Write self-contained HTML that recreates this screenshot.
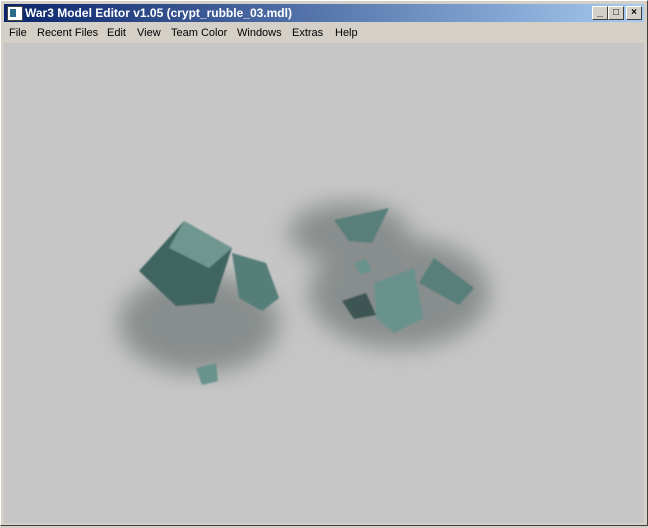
<!DOCTYPE html>
<html><head><style>
body{margin:0;width:648px;height:526px;overflow:hidden;background:#d4d0c8;font-family:"Liberation Sans",Tahoma,sans-serif;}
.win{position:absolute;left:0;top:0;width:646px;height:524px;border:1px solid #fff;border-right-color:#404040;border-bottom-color:#404040;background:#d4d0c8;}
.title{position:absolute;left:3px;top:3px;width:640px;height:18px;background:linear-gradient(to right,#0a246a,#a6caf0);color:#fff;font-weight:bold;font-size:12px;line-height:18px;}
.title .t{position:absolute;left:21px;top:0;}
.ic{position:absolute;left:3px;top:2px;width:14px;height:13px;background:#fff;border:1px solid #444;}
.ic:after{content:"";position:absolute;left:2px;top:2px;width:6px;height:8px;background:#2a6a8a;}
.btn{position:absolute;top:2px;width:14px;height:12px;background:#d4d0c8;border:1px solid #fff;border-right-color:#404040;border-bottom-color:#404040;color:#000;font-size:10px;line-height:12px;text-align:center;font-weight:bold;}
.menu{position:absolute;left:0;top:23px;width:640px;height:18px;font-size:11px;line-height:18px;color:#000;}
.menu span{position:absolute;top:0;}
.view{position:absolute;left:3px;top:42px;width:640px;height:480px;background:#c6c6c6;}
</style></head><body>
<div class="win">
<div class="title"><div class="ic"></div><div class="t">War3 Model Editor v1.05 (crypt_rubble_03.mdl)</div>
<div class="btn" style="left:588px">_</div><div class="btn" style="left:604px">□</div><div class="btn" style="left:622px">×</div></div>
<div class="menu"><span style="left:8px">File</span><span style="left:36px">Recent Files</span><span style="left:106px">Edit</span><span style="left:136px">View</span><span style="left:170px">Team Color</span><span style="left:236px">Windows</span><span style="left:291px">Extras</span><span style="left:334px">Help</span></div>
<div class="view">
<svg width="640" height="480">
<defs><filter id="b"><feGaussianBlur stdDeviation="12"/></filter><filter id="b2"><feGaussianBlur stdDeviation="0.7"/></filter></defs>
<g filter="url(#b)" fill="#56615e" opacity="0.55">
<ellipse cx="195" cy="280" rx="80" ry="50"/>
<ellipse cx="395" cy="250" rx="90" ry="55"/>
<ellipse cx="345" cy="190" rx="60" ry="30"/>
</g>
<g filter="url(#b2)">
<polygon points="135,228 180,178 228,205 210,260 172,263" fill="#3f6560"/>
<polygon points="180,178 228,205 205,225 165,205" fill="#6f9690"/>
<polygon points="228,210 262,220 275,255 258,268 235,255" fill="#557e79"/>
<polygon points="330,177 385,165 368,200 345,198" fill="#587f7a"/>
<polygon points="370,240 410,225 420,275 390,290 372,275" fill="#6a928d"/>
<polygon points="415,240 430,215 470,245 455,262" fill="#587f7a"/>
<polygon points="338,258 362,250 372,272 350,276" fill="#3d5552"/>
<polygon points="350,220 362,215 368,228 356,232" fill="#6a928d"/>
<polygon points="192,325 212,320 214,338 198,342" fill="#6a928d"/>
</g>
</svg>
</div>
</div>
</body></html>
